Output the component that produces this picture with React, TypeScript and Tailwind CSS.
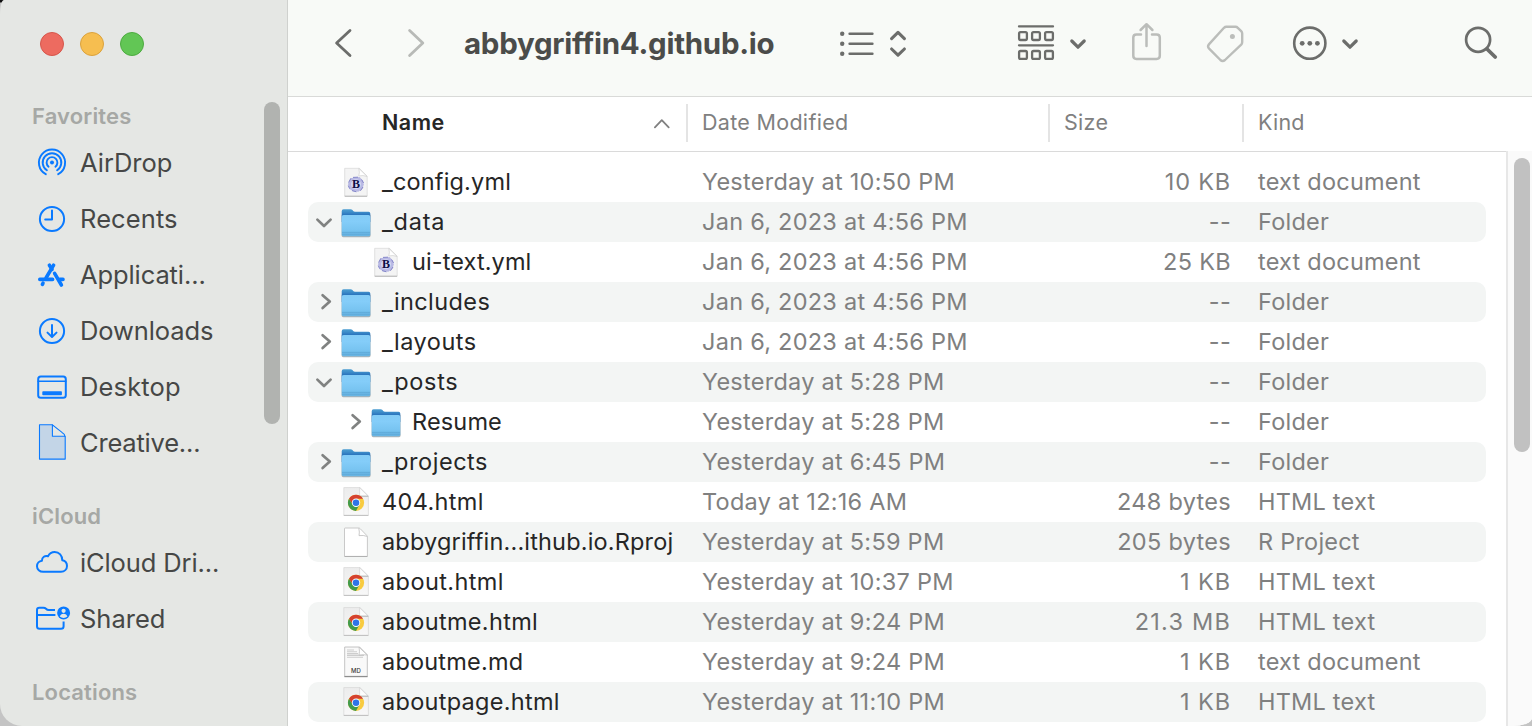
import type { ReactNode } from "react";

type IconKind = "folder" | "bb" | "chrome" | "blank" | "md";

interface FileRow {
  name: string;
  spacing: string;
  icon: IconKind;
  date: string;
  size: string;
  sizeSpacing?: string;
  kind: string;
  state?: "open" | "closed";
  nested?: boolean;
}

const files: FileRow[] = [
  { name: "_config.yml", spacing: "tracking-[0.17px]", icon: "bb", date: "Yesterday at 10:50 PM", size: "10 KB", sizeSpacing: "tracking-[0.8px]", kind: "text document" },
  { name: "_data", spacing: "tracking-[0.8px]", icon: "folder", date: "Jan 6, 2023 at 4:56 PM", size: "--", kind: "Folder", state: "open" },
  { name: "ui-text.yml", spacing: "tracking-[0.1px]", icon: "bb", date: "Jan 6, 2023 at 4:56 PM", size: "25 KB", kind: "text document", nested: true },
  { name: "_includes", spacing: "tracking-[0.4px]", icon: "folder", date: "Jan 6, 2023 at 4:56 PM", size: "--", kind: "Folder", state: "closed" },
  { name: "_layouts", spacing: "tracking-[0.5px]", icon: "folder", date: "Jan 6, 2023 at 4:56 PM", size: "--", kind: "Folder", state: "closed" },
  { name: "_posts", spacing: "tracking-[0.7px]", icon: "folder", date: "Yesterday at 5:28 PM", size: "--", kind: "Folder", state: "open" },
  { name: "Resume", spacing: "tracking-[0.15px]", icon: "folder", date: "Yesterday at 5:28 PM", size: "--", kind: "Folder", state: "closed", nested: true },
  { name: "_projects", spacing: "tracking-[0.55px]", icon: "folder", date: "Yesterday at 6:45 PM", size: "--", kind: "Folder", state: "closed" },
  { name: "404.html", spacing: "tracking-[0.35px]", icon: "chrome", date: "Today at 12:16 AM", size: "248 bytes", kind: "HTML text" },
  { name: "abbygriffin...ithub.io.Rproj", spacing: "tracking-[0.17px]", icon: "blank", date: "Yesterday at 5:59 PM", size: "205 bytes", kind: "R Project" },
  { name: "about.html", spacing: "tracking-[0.4px]", icon: "chrome", date: "Yesterday at 10:37 PM", size: "1 KB", sizeSpacing: "tracking-[0.9px]", kind: "HTML text" },
  { name: "aboutme.html", spacing: "tracking-[0.33px]", icon: "chrome", date: "Yesterday at 9:24 PM", size: "21.3 MB", sizeSpacing: "tracking-[1.2px]", kind: "HTML text" },
  { name: "aboutme.md", spacing: "tracking-[0.2px]", icon: "md", date: "Yesterday at 9:24 PM", size: "1 KB", sizeSpacing: "tracking-[0.9px]", kind: "text document" },
  { name: "aboutpage.html", spacing: "tracking-[0.28px]", icon: "chrome", date: "Yesterday at 11:10 PM", size: "1 KB", sizeSpacing: "tracking-[0.9px]", kind: "HTML text" },
];

function Gradients() {
  return (
    <svg className="absolute size-0" aria-hidden="true">
      <defs>
        <linearGradient id="folderFront" x1="0" y1="0" x2="0" y2="1">
          <stop offset="0" stopColor="#82cbf6" />
          <stop offset="0.3" stopColor="#84cdf9" />
          <stop offset="0.7" stopColor="#78c4f1" />
          <stop offset="1" stopColor="#66b3e2" />
        </linearGradient>
        <linearGradient id="folderBack" x1="0" y1="0" x2="0" y2="1">
          <stop offset="0" stopColor="#4d9fd2" />
          <stop offset="0.2" stopColor="#3f8fca" />
          <stop offset="0.45" stopColor="#2a74bd" />
        </linearGradient>
        <linearGradient id="paper" x1="0" y1="0" x2="0" y2="1">
          <stop offset="0" stopColor="#ececec" />
          <stop offset="1" stopColor="#f8f8f8" />
        </linearGradient>
      </defs>
    </svg>
  );
}

function FileIcon({ kind }: { kind: IconKind }) {
  if (kind === "folder") {
    return (
      <svg className="h-10 w-8 shrink-0" viewBox="0 0 32 40">
        <rect x="1.6" y="12" width="29" height="23.2" rx="1.6" fill="#8f9699" opacity="0.7" />
        <path d="M1.7 9.2Q1.7 7.2 3.6 7.2H10.6Q11.7 7.2 12.5 8.1L13.2 8.9Q13.9 9.7 15 9.7H28.6Q30.3 9.7 30.3 11.4V20H1.7Z" fill="url(#folderBack)" />
        <path d="M1.7 15Q1.7 12.9 3.6 12.9H28.4Q30.3 12.9 30.3 15V32.6Q30.3 34.2 28.7 34.2H3.3Q1.7 34.2 1.7 32.6Z" fill="url(#folderFront)" />
        <path d="M2 30.4H30M2 32.2H30" stroke="#559fcc" strokeWidth="0.6" />
      </svg>
    );
  }
  if (kind === "chrome") {
    return (
      <svg className="h-10 w-8 shrink-0" viewBox="0 0 32 40">
        <path d="M3.8 5.6H20L28.4 13.9V33.2H3.8Z" fill="url(#paper)" stroke="#d0d0d0" strokeWidth="0.6" />
        <path d="M3.8 33.5H28.4" stroke="#b9b9b9" strokeWidth="0.8" />
        <path d="M19.6 5.8V14.2H28.2Z" fill="#fdfdfd" stroke="#c9c9c9" strokeWidth="0.5" />
        <path d="M19.8 14.2H28.2" stroke="#a6a6a6" strokeWidth="0.8" />
        <circle cx="16" cy="20.8" r="8.1" fill="#f8cb40" />
        <path d="M9 16.75A8.1 8.1 0 0 1 23.02 16.75H16L12.6 22.8Z" fill="#d5402f" />
        <path d="M9 16.75L12.6 22.8L19.4 22.8L16 28.9A8.1 8.1 0 0 1 9 16.75Z" fill="#429a4c" />
        <circle cx="16" cy="20.8" r="4.2" fill="#fff" />
        <circle cx="16" cy="20.8" r="3.3" fill="#2f74e8" />
      </svg>
    );
  }
  if (kind === "bb") {
    return (
      <svg className="h-10 w-8 shrink-0" viewBox="0 0 32 40">
        <path d="M4.7 6.3H19.4L27.2 14.2V34H4.7Z" fill="#f4f4f4" stroke="#d0d0d0" strokeWidth="0.6" />
        <path d="M4.7 34.3H27.2" stroke="#b3b3b3" strokeWidth="0.9" />
        <path d="M18.8 6.4Q20 10.5 18.8 13.9Q23 13 27 14.4Z" fill="#fff" stroke="#cacaca" strokeWidth="0.6" />
        <path d="M10.6 16.2L15 15.4L19.6 15L22.8 18.4L23.8 22.4L22.4 26.8L18.4 29.8L13.4 29.2L9.4 27L8 22Z" fill="#b9b9e4" />
        <path d="M8.6 20.5L10.8 16.4M13 15.4L18 15.2M21.6 17.6L23.6 21M23 25L20.4 28.8M16.4 29.8L12 28.6M9.6 26.6L8.3 23.6" stroke="#8385c9" strokeWidth="1" />
        <circle cx="16" cy="22.2" r="5" fill="#d6d6f1" />
        <text x="16" y="26.2" textAnchor="middle" className="fill-[#0c0c45] font-['Liberation_Serif',serif] text-[12px] font-bold">B</text>
      </svg>
    );
  }
  if (kind === "md") {
    return (
      <svg className="h-10 w-8 shrink-0" viewBox="0 0 32 40">
        <path d="M4.7 5H19.6L27.3 12.8V34.3H4.7Z" fill="#f9f9f9" stroke="#b5b5b5" strokeWidth="0.8" />
        <path d="M4.4 34.6H27.6" stroke="#8d8d8d" strokeWidth="1.2" />
        <path d="M7 8H14M7 9.8H17M7 11.6H18M7 13.4H24M7 15.2H23" stroke="#cdcdcd" strokeWidth="1.1" />
        <path d="M19 5.2Q20 9.5 19 13Q23 12.4 27.2 13Z" fill="#fff" stroke="#b9b9b9" strokeWidth="0.7" />
        <text x="16" y="31" textAnchor="middle" className="fill-[#3c3c3c] font-['Inter',sans-serif] text-[6px] font-medium">MD</text>
      </svg>
    );
  }
  return (
    <svg className="h-10 w-8 shrink-0" viewBox="0 0 32 40">
      <path d="M4.5 6.5Q4.5 6 5 6H18.6Q19.6 6 20.3 6.8L26.7 13.4Q27.4 14.1 27.4 15V34Q27.4 34.4 27 34.4H5Q4.5 34.4 4.5 34Z" fill="#fff" stroke="#bdbdbd" strokeWidth="0.8" />
      <path d="M4.5 34.5H27.4" stroke="#a9a9a9" strokeWidth="0.8" />
      <path d="M18.8 6.2Q19.8 10.4 19 13.6Q23.4 13 27.2 14.4" fill="none" stroke="#bdbdbd" strokeWidth="0.8" />
    </svg>
  );
}

function Disclosure({ state }: { state?: "open" | "closed" }) {
  return (
    <svg className="h-10 w-8 shrink-0" viewBox="0 0 32 40" fill="none" stroke="#808281" strokeWidth="2.7" strokeLinecap="round" strokeLinejoin="round">
      {state === "open" && <path d="M9.4 17.6L16 24L22.6 17.6" />}
      {state === "closed" && <path d="M14.6 13.2L21.8 19.6L14.6 26" />}
    </svg>
  );
}

function SideIcon({ children }: { children: ReactNode }) {
  return (
    <svg className="size-9 shrink-0 overflow-visible" viewBox="0 0 36 36" fill="none" stroke="#0a7aff" strokeWidth="2" strokeLinecap="round" strokeLinejoin="round">
      {children}
    </svg>
  );
}

function SideItem({ label, spacing, children }: { label: string; spacing: string; children: ReactNode }) {
  return (
    <li className="flex h-14 items-center gap-[10px] pl-[34px]">
      <SideIcon>{children}</SideIcon>
      <span className={"text-[25.5px] whitespace-pre text-[#464746] " + spacing}>{label}</span>
    </li>
  );
}

function SideHeading({ children }: { children: ReactNode }) {
  return <h2 className="flex h-[39px] items-center pt-[2px] pl-8 text-[22px] font-semibold tracking-[0.15px] text-[#a6a8a5]">{children}</h2>;
}

function Sidebar() {
  return (
    <aside className="flex w-72 shrink-0 justify-between border-r border-[#cfd1ce] bg-[#e5e7e4]">
      <div className="flex flex-col">
        <div className="flex h-24 gap-4 pt-8 pl-10">
          <span className="size-6 rounded-full border border-[#d6564b] bg-[#ed6b60]" />
          <span className="size-6 rounded-full border border-[#dba23c] bg-[#f6be50]" />
          <span className="size-6 rounded-full border border-[#4dab40] bg-[#62c655]" />
        </div>
        <SideHeading>Favorites</SideHeading>
        <ul>
          <SideItem label="AirDrop" spacing="tracking-normal">
            <path d="M11.8 29.2A13.1 13.1 0 1 1 24.2 29.2" strokeWidth="1.9" />
            <path d="M12.9 25.3A9.3 9.3 0 1 1 23.1 25.3" strokeWidth="1.9" />
            <path d="M14.6 21.7A5.4 5.4 0 1 1 21.4 21.7" strokeWidth="1.9" />
            <circle cx="18" cy="17.6" r="2" fill="#0a7aff" stroke="none" />
          </SideItem>
          <SideItem label="Recents" spacing="tracking-[0.1px]">
            <circle cx="18" cy="18" r="12.1" />
            <path d="M18 9.6V18.5H11.2" />
          </SideItem>
          <SideItem label="Applicati..." spacing="tracking-[-0.1px]">
            <g strokeWidth="3.6">
              <path d="M15.4 8.2L18 12.4M20.6 16.4L27.4 28" />
              <path d="M19.6 8.2L12 21" />
              <path d="M9 26.2L8.4 27.4" />
              <path d="M5.8 22.4H18.6M25.8 22.4H29" />
            </g>
          </SideItem>
          <SideItem label="Downloads" spacing="tracking-[-0.1px]">
            <circle cx="18" cy="18" r="12.1" />
            <path d="M18 12V23.8M13.5 19.6L18 24L22.5 19.6" />
          </SideItem>
          <SideItem label="Desktop" spacing="tracking-[0.15px]">
            <rect x="4.2" y="7.6" width="27.6" height="21.2" rx="2.6" />
            <path d="M4.2 12.2H31.8" strokeWidth="1.6" />
            <rect x="8.3" y="22.2" width="19.6" height="4" rx="0.8" fill="#0a7aff" stroke="none" />
          </SideItem>
          <SideItem label="Creative..." spacing="tracking-[-0.2px]">
            <path d="M5.5 -0.2H18.2L31.2 11.6V34.1H5.5Z" fill="#c3d5e7" strokeWidth="1.1" />
            <path d="M18.4 -0.1V11.3H31Q30.9 9 28 7.4Z" fill="#e5e7e4" strokeWidth="1.1" />
          </SideItem>
        </ul>
        <div className="pt-[25px]">
          <SideHeading>iCloud</SideHeading>
        </div>
        <ul>
          <SideItem label="iCloud Dri..." spacing="tracking-[-0.12px]">
            <path d="M9.2 26.8C5.6 26.8 3 24.3 3 21.2C3 18.2 5.2 16.1 7.9 15.8C7.9 12.2 11 10.1 14 11.2C15.4 8.4 18 7 20.7 7C25.2 7 28.3 10.4 28.3 15.3C31 15.8 33 18.2 33 21C33 24.3 30.4 26.8 27 26.8Z" />
          </SideItem>
          <SideItem label="Shared" spacing="tracking-normal">
            <path d="M29.6 20.6V25.2Q29.6 27.8 27 27.8H5.6Q3 27.8 3 25.2V9Q3 6.7 5.4 6.7H9.4Q11 6.7 12 7.7Q13.2 9 14.8 9H21" strokeLinecap="butt" />
            <path d="M3 14H21.4" strokeLinecap="butt" />
            <circle cx="29.6" cy="11.9" r="6.5" fill="#0a7aff" stroke="none" />
            <circle cx="29.6" cy="9.8" r="2.1" fill="#e5e7e4" stroke="none" />
            <path d="M25.8 15.6Q26.6 12.7 29.6 12.7Q32.6 12.7 33.4 15.6Q31.8 17 29.6 17Q27.4 17 25.8 15.6Z" fill="#e5e7e4" stroke="none" />
          </SideItem>
        </ul>
        <div className="pt-[25px]">
          <SideHeading>Locations</SideHeading>
        </div>
      </div>
      <div className="pt-[102px] pr-[7px]">
        <div className="h-[322px] w-4 rounded-full bg-[#b1b3b0]" />
      </div>
    </aside>
  );
}

function Toolbar() {
  return (
    <header className="flex h-24 shrink-0 items-start bg-[#f8faf7]">
      <svg className="ml-[42px] h-[88px] w-[30px] shrink-0" viewBox="330 0 30 88" fill="none" stroke="#6c6d6b" strokeWidth="2.8" strokeLinecap="round" strokeLinejoin="round">
        <path d="M350 30.4L336.6 43L350 55.6" />
      </svg>
      <svg className="ml-10 h-[88px] w-[30px] shrink-0" viewBox="400 0 30 88" fill="none" stroke="#b8bab7" strokeWidth="2.8" strokeLinecap="round" strokeLinejoin="round">
        <path d="M409.6 30.4L422.8 43L409.6 55.6" />
      </svg>
      <h1 className="ml-[34px] flex h-[86px] w-[312px] shrink-0 items-center text-[29.5px] font-bold tracking-[-0.27px] whitespace-pre text-[#4b4c4a]">abbygriffin4.github.io</h1>
      <svg className="ml-[60px] h-[88px] w-[74px] shrink-0" viewBox="836 0 74 88" fill="none" stroke="#6c6d6b" strokeWidth="2.5" strokeLinecap="round" strokeLinejoin="round">
        <path d="M849.6 33.8H872.4M849.6 43.8H872.4M849.6 53.8H872.4" />
        <g fill="#6c6d6b" stroke="none">
          <circle cx="842.2" cy="33.8" r="2.2" />
          <circle cx="842.2" cy="43.8" r="2.2" />
          <circle cx="842.2" cy="53.8" r="2.2" />
        </g>
        <path d="M891.6 38.6L898 32.4L904.4 38.6M891.6 49L898 55.2L904.4 49" strokeWidth="3.1" />
      </svg>
      <svg className="ml-[104px] h-[88px] w-[76px] shrink-0" viewBox="1014 0 76 88" fill="none" stroke="#6c6d6b" strokeWidth="2.3" strokeLinecap="round" strokeLinejoin="round">
        <path d="M1019 26.4H1053M1019 45.3H1053" />
        <rect x="1019.1" y="32.2" width="7.8" height="7.8" rx="1.4" />
        <rect x="1032.1" y="32.2" width="7.8" height="7.8" rx="1.4" />
        <rect x="1045.1" y="32.2" width="7.8" height="7.8" rx="1.4" />
        <rect x="1019.1" y="51" width="7.8" height="7.8" rx="1.4" />
        <rect x="1032.1" y="51" width="7.8" height="7.8" rx="1.4" />
        <rect x="1045.1" y="51" width="7.8" height="7.8" rx="1.4" />
        <path d="M1071.8 41L1078 47.2L1084.2 41" strokeWidth="3.2" />
      </svg>
      <svg className="ml-[38px] h-[88px] w-[38px] shrink-0" viewBox="1128 0 38 88" fill="none" stroke="#bbbdba" strokeWidth="2.5" strokeLinecap="round" strokeLinejoin="round">
        <path d="M1141 34.6H1136.4Q1133.3 34.6 1133.3 37.6V55.8Q1133.3 58.9 1136.4 58.9H1156.6Q1159.8 58.9 1159.8 55.8V37.6Q1159.8 34.6 1156.6 34.6H1152" />
        <path d="M1146.5 46V24.6M1140.6 30L1146.5 24.2L1152.4 30" />
      </svg>
      <svg className="ml-9 h-[88px] w-[46px] shrink-0" viewBox="1202 0 46 88" fill="none" stroke="#bbbdba" strokeWidth="2.4" strokeLinecap="round" strokeLinejoin="round">
        <path d="M1226.4 26.8H1235.4Q1236.8 26.8 1237.8 27.8L1241.2 31.2Q1242.2 32.2 1242.2 33.6V42Q1242.2 43.6 1241.2 44.6L1225 60Q1222.6 62 1220.4 60L1208.9 48.4Q1207.2 46.4 1208.9 44.4L1224 27.8Q1225 26.8 1226.4 26.8Z" />
        <circle cx="1232.4" cy="36.6" r="2.5" fill="#bbbdba" stroke="none" />
      </svg>
      <svg className="ml-[42px] h-[88px] w-[72px] shrink-0" viewBox="1290 0 72 88" fill="none" stroke="#6c6d6b" strokeWidth="2.6" strokeLinecap="round" strokeLinejoin="round">
        <circle cx="1309.8" cy="43.2" r="15.6" />
        <g fill="#6c6d6b" stroke="none">
          <circle cx="1302.2" cy="43.3" r="2.4" />
          <circle cx="1309.8" cy="43.3" r="2.4" />
          <circle cx="1317.4" cy="43.3" r="2.4" />
        </g>
        <path d="M1343.8 41L1350 47.2L1356.2 41" strokeWidth="3.2" />
      </svg>
      <svg className="ml-[98px] h-[88px] w-[42px] shrink-0" viewBox="1460 0 42 88" fill="none" stroke="#6c6d6b" strokeWidth="2.7" strokeLinecap="round">
        <circle cx="1478.1" cy="39.8" r="12" />
        <path d="M1487 49L1495.2 57" strokeWidth="3.8" />
      </svg>
    </header>
  );
}

function ColumnHeader() {
  return (
    <div className="flex h-[55px] shrink-0 border-t border-[#d9dad8] bg-white pt-[7px] text-[21.5px] text-[#808080]">
      <div className="flex h-[38px] w-[398px] items-center justify-between pr-[14px] pb-[2px] pl-[94px]">
        <span className="font-semibold tracking-[0.5px] text-[#262626]">Name</span>
        <svg className="h-[38px] w-5" viewBox="0 0 20 38" fill="none" stroke="#808080" strokeWidth="1.8" strokeLinecap="round" strokeLinejoin="round">
          <path d="M2.9 24.4L9.8 17.2L16.7 24.4" />
        </svg>
      </div>
      <div className="flex h-[38px] w-[362px] items-center border-l-2 border-[#e4e4e4] pb-[2px] pl-[14px] tracking-[0.3px]">Date Modified</div>
      <div className="flex h-[38px] w-[194px] items-center border-l-2 border-[#e4e4e4] pb-[2px] pl-[14px] tracking-[0.3px]">Size</div>
      <div className="flex h-[38px] flex-1 items-center border-l-2 border-[#e4e4e4] pb-[2px] pl-[14px] tracking-[0.2px]">Kind</div>
    </div>
  );
}

function Row({ file }: { file: FileRow }) {
  return (
    <li className="flex h-10 items-center rounded-[10px] text-[23.5px] whitespace-pre text-[#808080] even:bg-[#f3f5f4]">
      <div className="flex w-[394px] shrink-0 items-center">
        {file.nested && <span className="w-[30px] shrink-0" />}
        <Disclosure state={file.state} />
        <FileIcon kind={file.icon} />
        <span className={"pl-[10px] text-[#262626] " + file.spacing}>{file.name}</span>
      </div>
      <div className="w-[346px] shrink-0 tracking-[0.26px]">{file.date}</div>
      <div className={"w-[183px] shrink-0 text-right " + (file.sizeSpacing ?? "tracking-[0.3px]")}>{file.size}</div>
      <div className="pl-[27px] tracking-[0.22px]">{file.kind}</div>
    </li>
  );
}

export default function App() {
  return (
    <div className="h-[726px] w-[1532px] overflow-hidden bg-[linear-gradient(180deg,#111_2px,#c4c4c4_3px)] font-['Inter',sans-serif]">
      <Gradients />
      <div className="flex h-full overflow-hidden rounded-tl-[4px_14px] rounded-br-[20px_8px] rounded-bl-[22px]">
        <Sidebar />
        <main className="flex min-w-0 flex-1 flex-col bg-white">
          <Toolbar />
          <ColumnHeader />
          <div className="flex min-h-0 flex-1">
            <ul className="w-[1218px] shrink-0 overflow-hidden border-t border-[#dadada] pt-[10px] pr-5 pl-5">
              {files.map((file) => (
                <Row key={file.name} file={file} />
              ))}
            </ul>
            <div className="flex flex-1 border-l-2 border-[#e7e7e7] bg-[#fafafa] pt-[7px] pl-[6px]">
              <div className="h-[294px] w-4 rounded-full bg-[#c1c1c1]" />
            </div>
          </div>
        </main>
      </div>
    </div>
  );
}
